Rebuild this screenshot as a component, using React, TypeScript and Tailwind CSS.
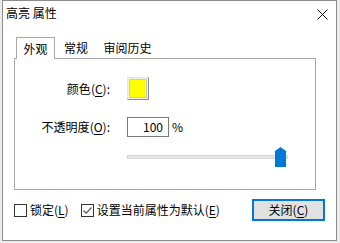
import React from "react";

const font = { fontFamily: '"Noto Sans CJK SC", "Noto Sans", sans-serif' };

function Key({ k }: { k: string }) {
  return (
    <>
      (<span className="underline underline-offset-2">{k}</span>)
    </>
  );
}

function CheckBox({ checked }: { checked?: boolean }) {
  return (
    <div className="w-[13px] h-[13px] border border-[#333333] bg-white flex items-center justify-center">
      {checked && (
        <svg width="11" height="11" viewBox="0 0 11 11">
          <path d="M1.5 5.5 L4.2 8.2 L9.5 2.5" fill="none" stroke="#555555" strokeWidth="1.2" />
        </svg>
      )}
    </div>
  );
}

export default function App() {
  return (
    <div className="w-[340px] h-[243px] bg-[#ececec] text-[12px] text-black leading-none" style={font}>
      <div className="ml-[2px] w-[335px] h-[241px] border border-[#8c8c8c] bg-white flex flex-col">
        {/* title bar */}
        <div className="h-[24px] flex items-center justify-between pl-[3px] pr-[8px]">
          <span>高亮 属性</span>
          <svg width="11" height="11" viewBox="0 0 11 11" className="mt-[3px]">
            <path d="M0.5 0.5 L10.5 10.5 M10.5 0.5 L0.5 10.5" stroke="#111111" strokeWidth="1" />
          </svg>
        </div>

        {/* tabs */}
        <div className="mt-[12px] ml-[13px] flex items-end h-[21px]">
          <div className="relative z-10 w-[39px] h-[22px] -mb-px border-l border-t border-r border-[#a8a8a8] bg-white flex items-center justify-center">
            外观
          </div>
          <div className="w-[42px] h-[20px] flex items-center justify-center">常规</div>
          <div className="w-[61px] h-[20px] flex items-center justify-center">审阅历史</div>
        </div>

        {/* panel */}
        <div className="ml-[11px] w-[302px] h-[132px] border border-[#a8a8a8] bg-white flex flex-col">
          <div className="mt-[18px] flex items-center h-[23px]">
            <div className="w-[95px] text-right">
              颜色<Key k="C" />:
            </div>
            <div className="ml-[17px] w-[22px] h-[23px] border border-t-[#e3e3e3] border-l-[#e3e3e3] border-r-[#8a8a8a] border-b-[#8a8a8a] bg-[#f0f0f0] p-[1px]">
              <div className="w-full h-full bg-[#ffff00] border border-[#c8c8c8]" />
            </div>
          </div>
          <div className="mt-[17px] flex items-center h-[20px]">
            <div className="w-[95px] text-right">
              不透明度<Key k="O" />:
            </div>
            <div className="ml-[17px] w-[42px] h-[20px] border border-[#7a7a7a] flex items-center justify-end pr-[5px]">
              100
            </div>
            <span className="ml-[3px]">%</span>
          </div>
          <div className="mt-[10px] ml-[112px] w-[161px] h-[20px] flex items-center relative">
            <div className="w-full h-[4px] bg-[#e7e7e7] border border-[#d6d6d6]" />
            <svg width="11" height="20" viewBox="0 0 11 20" className="absolute right-[2px] top-0">
              <polygon points="0,4 5.5,0 11,4 11,20 0,20" fill="#0078d7" />
            </svg>
          </div>
        </div>

        {/* bottom row */}
        <div className="mt-[9px] flex items-center h-[22px] pl-[11px] pr-[11px]">
          <CheckBox />
          <span className="ml-[3px]">
            锁定<Key k="L" />
          </span>
          <div className="ml-[12px]">
            <CheckBox checked />
          </div>
          <span className="ml-[3px]">
            设置当前属性为默认<Key k="E" />
          </span>
          <div className="ml-auto w-[73px] h-[22px] border-2 border-[#0078d7] bg-[#e1e1e1] flex items-center justify-center">
            关闭<Key k="C" />
          </div>
        </div>
      </div>
    </div>
  );
}
